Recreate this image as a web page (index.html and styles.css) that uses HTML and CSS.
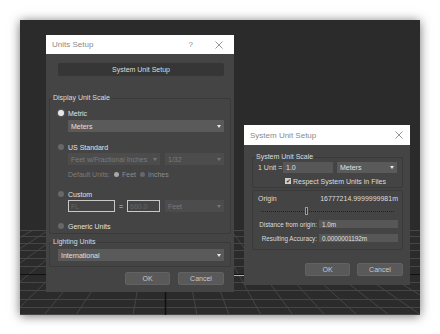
FILE: index.html
```html
<!DOCTYPE html>
<html lang="en">
<head>
  <meta charset="UTF-8" />
  <title>Units Setup</title>
  <link rel="stylesheet" href="styles.css">
</head>
<body>
  <div class="shot">
    <svg class="grid" width="400" height="295" viewBox="0 0 400 295">
      <g stroke="#464646" stroke-width="1">
        <line x1="0" y1="210.5" x2="400" y2="210.5"/>
        <line x1="0" y1="216.5" x2="400" y2="216.5"/>
        <line x1="0" y1="223.5" x2="400" y2="223.5"/>
        <line x1="0" y1="230.5" x2="400" y2="230.5"/>
        <line x1="0" y1="238.5" x2="400" y2="238.5"/>
        <line x1="0" y1="246.5" x2="400" y2="246.5"/>
        <line x1="0" y1="262.5" x2="400" y2="262.5"/>
        <line x1="0" y1="270.5" x2="400" y2="270.5"/>
        <line x1="0" y1="279.5" x2="400" y2="279.5"/>
        <line x1="0" y1="287.5" x2="400" y2="287.5"/>
        <line x1="0" y1="294.5" x2="400" y2="294.5"/>
        <line x1="-20" y1="210" x2="-200" y2="295"/>
        <line x1="-3" y1="210" x2="-168" y2="295"/>
        <line x1="13" y1="210" x2="-136" y2="295"/>
        <line x1="29" y1="210" x2="-104" y2="295"/>
        <line x1="46" y1="210" x2="-72" y2="295"/>
        <line x1="62" y1="210" x2="-40" y2="295"/>
        <line x1="79" y1="210" x2="-8" y2="295"/>
        <line x1="95" y1="210" x2="24" y2="295"/>
        <line x1="112" y1="210" x2="56" y2="295"/>
        <line x1="128" y1="210" x2="113" y2="295"/>
        <line x1="161" y1="210" x2="177" y2="295"/>
        <line x1="178" y1="210" x2="209" y2="295"/>
        <line x1="194" y1="210" x2="241" y2="295"/>
        <line x1="211" y1="210" x2="273" y2="295"/>
        <line x1="227" y1="210" x2="305" y2="295"/>
        <line x1="244" y1="210" x2="337" y2="295"/>
        <line x1="260" y1="210" x2="369" y2="295"/>
        <line x1="277" y1="210" x2="401" y2="295"/>
        <line x1="293" y1="210" x2="433" y2="295"/>
      </g>
      <line x1="0" y1="254.5" x2="400" y2="254.5" stroke="#111" stroke-width="1"/>
      <line x1="214" y1="255.5" x2="224" y2="255.5" stroke="#c8c800" stroke-width="1"/>
      <line x1="145.5" y1="246" x2="145.5" y2="295" stroke="#111" stroke-width="1.5"/>
    </svg>

    <div class="dialog units">
      <div class="titlebar">
        <span class="title">Units Setup</span>
        <span class="help">?</span>
        <svg class="close" width="8" height="8" viewBox="0 0 8 8"><path d="M0.5 0.5L7.5 7.5M7.5 0.5L0.5 7.5" stroke="#8a8a8a" stroke-width="0.9"/></svg>
      </div>
      <div class="body">
        <div class="wide-btn">System Unit Setup</div>

        <fieldset class="group display">
          <legend>Display Unit Scale</legend>
          <div class="opt"><span class="radio on"></span>Metric</div>
          <div class="select main">Meters<span class="arrow"></span></div>

          <div class="opt gap"><span class="radio"></span>US Standard</div>
          <div class="pair">
            <div class="select off frac">Feet w/Fractional Inches<span class="arrow"></span></div>
            <div class="select off grow">1/32<span class="arrow"></span></div>
          </div>
          <div class="defaults">
            <span>Default Units:</span>
            <span class="radio small on-dim"></span><span>Feet</span>
            <span class="radio small"></span><span>Inches</span>
          </div>

          <div class="opt gap"><span class="radio"></span>Custom</div>
          <div class="pair">
            <div class="field-box fl">FL</div>
            <span class="eq">=</span>
            <div class="field-box num">660.0</div>
            <div class="select off grow">Feet<span class="arrow"></span></div>
          </div>

          <div class="opt generic"><span class="radio"></span>Generic Units</div>
        </fieldset>

        <fieldset class="group lighting">
          <legend>Lighting Units</legend>
          <div class="select main">International<span class="arrow"></span></div>
        </fieldset>

        <div class="buttons">
          <div class="btn">OK</div>
          <div class="btn">Cancel</div>
        </div>
      </div>
    </div>

    <div class="dialog system">
      <div class="titlebar">
        <span class="title">System Unit Setup</span>
        <svg class="close" width="8" height="8" viewBox="0 0 8 8"><path d="M0.5 0.5L7.5 7.5M7.5 0.5L0.5 7.5" stroke="#8a8a8a" stroke-width="0.9"/></svg>
      </div>
      <div class="body">
        <fieldset class="group scale">
          <legend>System Unit Scale</legend>
          <div class="unit-row">
            <span class="unit-label">1 Unit =</span>
            <div class="field">1.0</div>
            <div class="select unit">Meters<span class="arrow"></span></div>
          </div>
          <div class="check-row"><span class="check">&#10004;</span>Respect System Units in Files</div>
        </fieldset>

        <div class="origin">
          <div class="origin-head"><span>Origin</span><span>16777214.9999999981m</span></div>
          <div class="slider"><span class="thumb"></span></div>
          <div class="kv"><span class="k">Distance from origin:</span><div class="field">1.0m</div></div>
          <div class="kv"><span class="k">Resulting Accuracy:</span><div class="field">0.0000001192m</div></div>
        </div>

        <div class="buttons">
          <div class="btn">OK</div>
          <div class="btn">Cancel</div>
        </div>
      </div>
    </div>
  </div>
</body>
</html>
```

FILE: styles.css
```css
body {
  margin: 0;
  padding: 20px;
  background: #fff;
  font-family: 'Liberation Sans', Arial, sans-serif;
}
.shot {
  position: relative;
  width: 400px;
  height: 295px;
  background: #2b2b2b;
  overflow: hidden;
  box-shadow: 0 1px 10px rgba(0, 0, 0, 0.55);
}
.grid {
  position: absolute;
  left: 0;
  top: 0;
}
.dialog {
  position: absolute;
  background: #444;
  color: #dcdcdc;
  font-size: 7px;
  display: flex;
  flex-direction: column;
}
.dialog.units { left: 26px; top: 15px; width: 188px; height: 257px; }
.dialog.system { left: 224px; top: 105px; width: 166px; height: 160px; }

.titlebar {
  background: #fff;
  height: 19px;
  display: flex;
  align-items: center;
  padding: 0 11px 0 6px;
  color: #8a8a8a;
  font-size: 8px;
}
.system .titlebar { height: 20px; padding-right: 7px; }
.titlebar .title { flex: 1; }
.help { margin-right: 22px; font-size: 8px; }
.close { display: block; }

.body {
  flex: 1;
  display: flex;
  flex-direction: column;
  padding: 9px 3px 0 3px;
}
.wide-btn {
  height: 13px;
  margin: 0 7px 0 9px;
  background: #363636;
  border-radius: 2px;
  display: flex;
  align-items: center;
  justify-content: center;
}

.group {
  margin: 0;
  padding: 0 0 2px 0;
  border: 1px solid #3a3a3a;
  border-radius: 2px;
  min-width: 0;
}
.group legend {
  padding: 0 1px;
  margin-left: 2px;
  line-height: 8px;
  height: 8px;
}
.group.display { margin-top: 18px; padding-top: 6px; }
.group.lighting { margin-top: 4px; padding: 3px 6px 5px 8px; }
.group.lighting legend { margin-left: -6px; }

.opt {
  height: 10px;
  display: flex;
  align-items: center;
  padding-left: 8px;
  color: #e2e2e2;
}
.opt.gap { margin-top: 10px; }
.opt.generic { margin-top: 9px; }
.radio {
  width: 6px;
  height: 6px;
  border-radius: 50%;
  background: #686868;
  margin-right: 4px;
  flex: none;
}
.radio.on { background: #e8e8e8; box-shadow: 0 0 2px #9a9a9a; }
.radio.small { width: 5px; height: 5px; margin: 0 3px 0 4px; }
.radio.on-dim { background: #a8a8a8; }

.select {
  height: 12px;
  background: #5a5a5a;
  display: flex;
  align-items: center;
  padding: 0 3px;
  color: #e0e0e0;
  white-space: nowrap;
}
.select .arrow {
  margin-left: auto;
  width: 0;
  height: 0;
  border-left: 2px solid transparent;
  border-right: 2px solid transparent;
  border-top: 3px solid #e8e8e8;
}
.select.main { margin: 2px 6px 0 18px; }
.lighting .select.main { margin: 0; }
.select.off { background: #4c4c4c; color: #7a7a7a; }
.select.off .arrow { border-top-color: #777; }

.pair {
  display: flex;
  align-items: center;
  margin: 1px 6px 0 18px;
}
.select.frac { width: 92px; flex: none; box-sizing: border-box; margin-right: 5px; }
.select.grow { flex: 1; }
.field-box {
  height: 12px;
  flex: none;
  box-sizing: border-box;
  border: 1px solid #c8c8c8;
  background: #454545;
  color: #666;
  display: flex;
  align-items: center;
  padding: 0 2px;
}
.field-box.fl { width: 47px; }
.field-box.num { width: 33px; margin-right: 5px; }
.eq { width: 12px; flex: none; text-align: center; color: #ccc; }

.defaults {
  height: 10px;
  margin: 4px 0 0 18px;
  display: flex;
  align-items: center;
  color: #7c7c7c;
}
.defaults span:nth-child(3), .defaults span:nth-child(5) { color: #8c8c8c; }

.buttons {
  display: flex;
  justify-content: flex-end;
  gap: 8px;
  margin: 5px 7px 0 0;
}
.btn {
  width: 45px;
  height: 13px;
  background: #595959;
  border: 1px solid #626262;
  box-sizing: border-box;
  border-radius: 2px;
  color: #c8c8c8;
  display: flex;
  align-items: center;
  justify-content: center;
}
.btn + .btn { width: 46px; }

/* system unit setup */
.system .body { padding: 8px 7px 0 8px; }
.group.scale { padding: 0 5px 2px 5px; }
.group.scale legend { margin-left: -3px; }
.unit-row {
  display: flex;
  align-items: center;
  height: 11px;
  margin-top: 1px;
}
.unit-label { width: 25px; white-space: nowrap; }
.field {
  background: #575757;
  color: #e0e0e0;
  height: 11px;
  display: flex;
  align-items: center;
  padding: 0 3px;
  box-sizing: border-box;
  white-space: nowrap;
}
.unit-row .field { width: 50px; margin-right: 4px; }
.select.unit { flex: 1; height: 11px; }
.check-row {
  display: flex;
  align-items: center;
  height: 8px;
  margin: 4px 0 0 27px;
  white-space: nowrap;
}
.check {
  width: 6px;
  height: 6px;
  background: #cfcfcf;
  color: #333;
  font-size: 6px;
  line-height: 6px;
  text-align: center;
  margin-right: 2px;
}

.origin {
  margin-top: 2px;
  border: 1px solid #3a3a3a;
  border-radius: 2px;
  height: 60px;
  box-sizing: border-box;
  padding: 4px 4px 0 2px;
}
.origin-head {
  display: flex;
  justify-content: space-between;
  height: 8px;
  line-height: 8px;
  padding-left: 3px;
}
.slider {
  position: relative;
  height: 8px;
  margin: 4px 3px 0 6px;
  background: linear-gradient(90deg, #222 50%, transparent 50%) 0 4px / 2px 1px repeat-x;
}
.thumb {
  position: absolute;
  left: 44px;
  top: 0;
  width: 3px;
  height: 8px;
  background: #2a2a2a;
  border: 1px solid #9a9a9a;
  box-sizing: border-box;
}
.kv {
  display: flex;
  align-items: center;
  margin-top: 5px;
  font-size: 6.3px;
}
.kv + .kv { margin-top: 6px; }
.kv .k { width: 62px; flex: none; text-align: right; margin-right: 2px; white-space: nowrap; }
.kv .field { flex: 1; height: 8px; }
.system .buttons { margin-top: 13px; margin-right: 0; gap: 7px; }
```
